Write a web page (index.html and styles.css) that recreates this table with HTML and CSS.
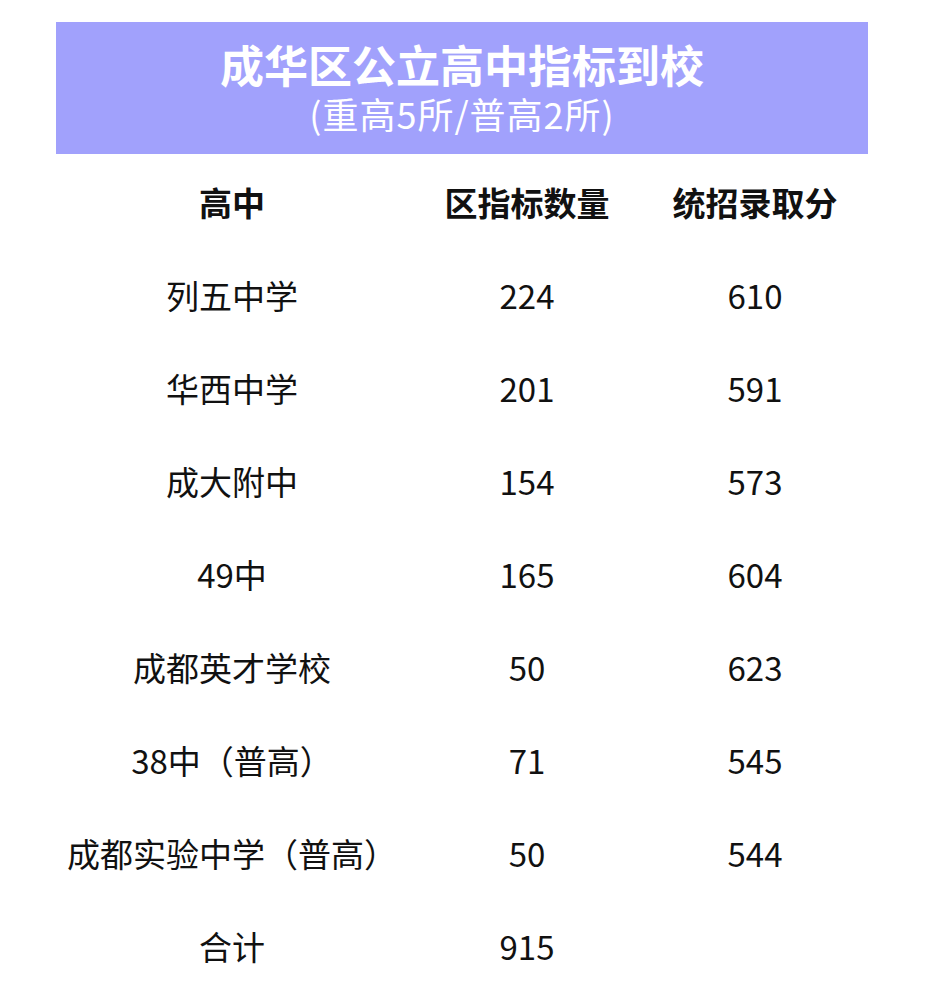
FILE: index.html
```html
<!DOCTYPE html>
<html lang="zh-CN">
<head>
<meta charset="utf-8">
<link rel="stylesheet" href="styles.css">
</head>
<body>
<div class="page">
  <div class="banner">
    <div class="title">成华区公立高中指标到校</div>
    <div class="subtitle">(重高5所/普高2所)</div>
  </div>
  <div class="table">
    <div class="cell head">高中</div><div class="cell head">区指标数量</div><div class="cell head">统招录取分</div>
    <div class="cell">列五中学</div><div class="cell">224</div><div class="cell">610</div>
    <div class="cell">华西中学</div><div class="cell">201</div><div class="cell">591</div>
    <div class="cell">成大附中</div><div class="cell">154</div><div class="cell">573</div>
    <div class="cell">49中</div><div class="cell">165</div><div class="cell">604</div>
    <div class="cell">成都英才学校</div><div class="cell">50</div><div class="cell">623</div>
    <div class="cell">38中（普高）</div><div class="cell">71</div><div class="cell">545</div>
    <div class="cell">成都实验中学（普高）</div><div class="cell">50</div><div class="cell">544</div>
    <div class="cell">合计</div><div class="cell">915</div><div class="cell"></div>
  </div>
</div>
</body>
</html>
```
FILE: styles.css
```css
html, body {
  margin: 0;
  padding: 0;
  background: #ffffff;
}
body {
  font-family: "Noto Sans CJK SC", "Noto Sans", sans-serif;
  color: #111111;
}
.page {
  padding: 22px 0 0 56px;
  width: 812px;
}
.banner {
  background: #a1a1fc;
  height: 132px;
  box-sizing: border-box;
  padding-top: 19px;
  display: flex;
  flex-direction: column;
  align-items: center;
  color: #ffffff;
}
.title {
  font-size: 44px;
  font-weight: 700;
  line-height: 46px;
  padding-left: 0;
}
.subtitle {
  font-size: 36px;
  line-height: 40px;
  font-weight: 400;
  margin-top: 6px;
  letter-spacing: 1px;
}
.table {
  margin-top: 2px;
  display: grid;
  grid-template-columns: 352px 238px 218px;
  grid-auto-rows: 93px;
}
.cell {
  display: flex;
  align-items: center;
  justify-content: center;
  font-size: 33px;
  line-height: 1;
  white-space: nowrap;
}
.head {
  font-weight: 700;
  font-size: 33px;
}
```
